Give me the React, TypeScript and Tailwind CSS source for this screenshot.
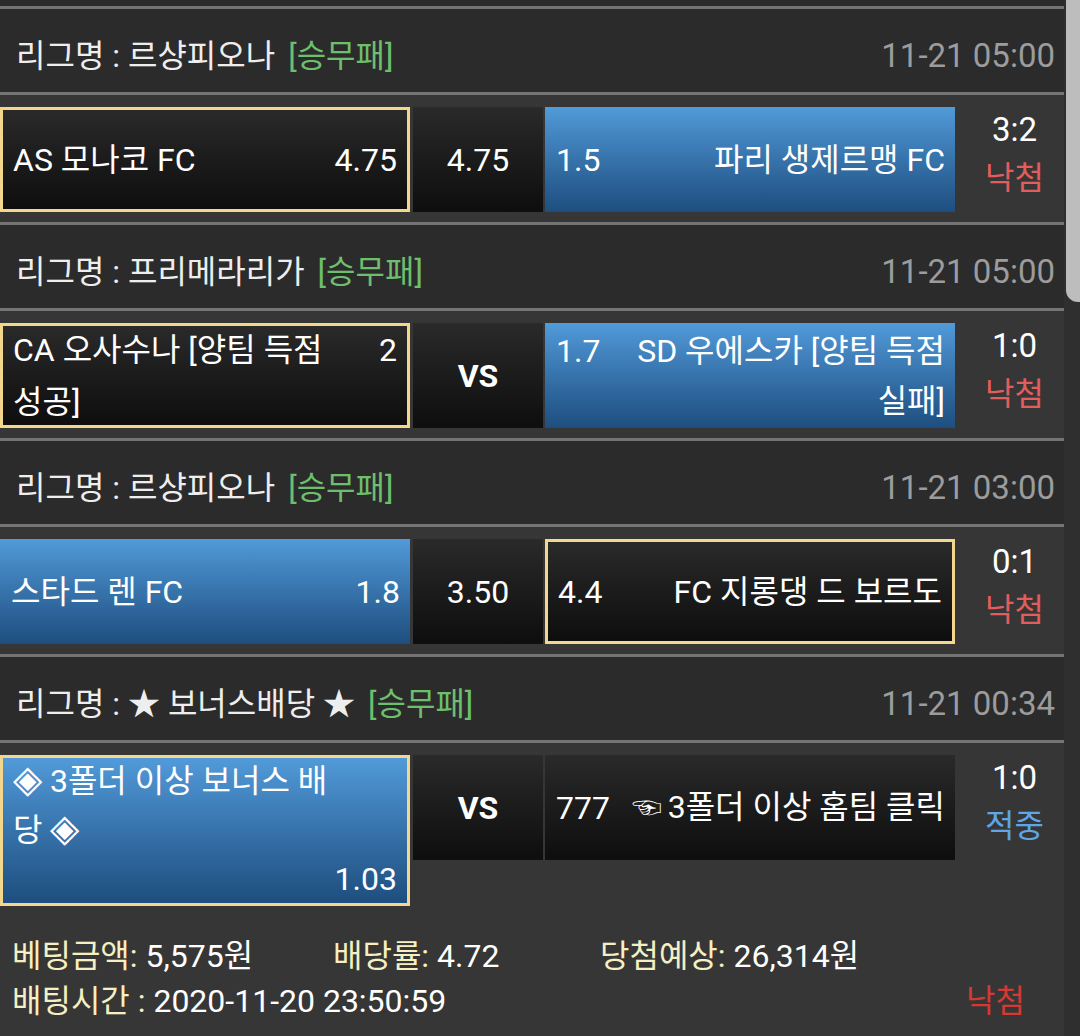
import React from "react";

function Header({ league, time }: { league: string; time: string }) {
  return (
    <div className="h-[86px] border-t-[3px] border-[#747474] bg-[#2b2b2b] flex items-center justify-between pl-[16px] pr-[9px] pt-[11px] text-[32px] leading-[40px]">
      <div className="flex items-center">
        <span className="text-[#eeeeee]">리그명 : {league}</span>
        <span className="ml-[13px] text-[#6dbf6d]">[승무패]</span>
      </div>
      <span className="text-[#9c9c9c] text-[33px]">{time}</span>
    </div>
  );
}

const blackBg = "bg-linear-to-b from-[#2a2a2a] to-[#0e0e0e]";
const blueBg = "bg-linear-to-b from-[#519ad9] to-[#1e4e7f]";
const gold = "border-[3px] border-[#f3d78c]";

function Score({ score, result, win }: { score: string; result: string; win?: boolean }) {
  return (
    <div className="flex-1 flex flex-col items-center pl-[10px] -mt-[1px] text-[32px] leading-[48px]">
      <span className="text-white text-[33px]">{score}</span>
      <span className={win ? "text-[#5ea6e6]" : "text-[#e35d5d]"}>{result}</span>
    </div>
  );
}

function Middle({ text, bold }: { text: string; bold?: boolean }) {
  return (
    <div
      className={`ml-[3px] w-[130px] h-[105px] flex items-center justify-center ${blackBg} ${
        bold ? "font-bold text-[32px]" : "text-[32px]"
      } text-white`}
    >
      {text}
    </div>
  );
}

function Row({ children }: { children: React.ReactNode }) {
  return (
    <div className="h-[130px] border-t-[3px] border-[#747474] bg-[#363636] flex items-start pt-[12px]">
      {children}
    </div>
  );
}

export default function App() {
  return (
    <div className="w-[1080px] h-[1036px] bg-[#363636] flex overflow-hidden font-[Roboto,'Noto_Sans_CJK_KR',sans-serif] text-white">
      <div className="w-[1064px] flex flex-col">
        <div className="h-[6px] bg-[#2b2b2b]" />

        {/* Section 1 */}
        <Header league="르샹피오나" time="11-21 05:00" />
        <Row>
          <div className={`w-[410px] h-[105px] ${gold} ${blackBg} flex items-center justify-between px-[10px] text-[32px] leading-[48px]`}>
            <span>AS 모나코 FC</span>
            <span>4.75</span>
          </div>
          <Middle text="4.75" />
          <div className={`ml-[2px] w-[410px] h-[105px] ${blueBg} flex items-center justify-between pl-[11px] pr-[10px] text-[32px] leading-[48px]`}>
            <span>1.5</span>
            <span>파리 생제르맹 FC</span>
          </div>
          <Score score="3:2" result="낙첨" />
        </Row>

        {/* Section 2 */}
        <Header league="프리메라리가" time="11-21 05:00" />
        <Row>
          <div className={`w-[410px] h-[105px] ${gold} ${blackBg} flex items-center px-[10px] text-[32px] leading-[52px]`}>
            <div className="flex w-full items-start justify-between">
              <span>
                CA 오사수나 [양팀 득점
                <br />
                성공]
              </span>
              <span>2</span>
            </div>
          </div>
          <Middle text="VS" bold />
          <div className={`ml-[2px] w-[410px] h-[105px] ${blueBg} flex items-center pl-[11px] pr-[10px] text-[32px] leading-[50px]`}>
            <div className="flex w-full items-start justify-between">
              <span>1.7</span>
              <span className="text-right">
                SD 우에스카 [양팀 득점
                <br />
                실패]
              </span>
            </div>
          </div>
          <Score score="1:0" result="낙첨" />
        </Row>

        {/* Section 3 */}
        <Header league="르샹피오나" time="11-21 03:00" />
        <Row>
          <div className={`w-[410px] h-[105px] ${blueBg} flex items-center justify-between pl-[11px] pr-[10px] text-[32px] leading-[48px]`}>
            <span>스타드 렌 FC</span>
            <span>1.8</span>
          </div>
          <Middle text="3.50" />
          <div className={`ml-[2px] w-[410px] h-[105px] ${gold} ${blackBg} flex items-center justify-between px-[10px] text-[32px] leading-[48px]`}>
            <span>4.4</span>
            <span>FC 지롱댕 드 보르도</span>
          </div>
          <Score score="0:1" result="낙첨" />
        </Row>

        {/* Section 4 */}
        <Header league="★ 보너스배당 ★" time="11-21 00:34" />
        <div className="flex-1 border-t-[3px] border-[#747474] bg-[#363636] flex flex-col pt-[12px]">
          <div className="flex items-start">
            <div className={`w-[410px] h-[151px] ${gold} ${blueBg} flex flex-col justify-center px-[10px] text-[32px] leading-[49px]`}>
              <span>
                <span className="text-[38px] leading-none">◈</span> 3폴더 이상 보너스 배
                <br />
                당 <span className="text-[38px] leading-none">◈</span>
              </span>
              <span className="text-right">1.03</span>
            </div>
            <Middle text="VS" bold />
            <div className={`ml-[2px] w-[410px] h-[105px] ${blackBg} flex items-center justify-between pl-[11px] pr-[10px] text-[32px] leading-[48px]`}>
              <span>777</span>
              <span>
                <span className="text-[30px] mr-[6px]">☜</span>3폴더 이상 홈팀 클릭
              </span>
            </div>
            <Score score="1:0" result="적중" win />
          </div>

          <div className="mt-[28px] pl-[12px] pr-[39px] text-[32px] leading-[45px]">
            <div className="flex">
              <div className="w-[321px]">
                <span className="text-[#f6efc2]">베팅금액:</span> 5,575원
              </div>
              <div className="w-[267px]">
                <span className="text-[#f6efc2]">배당률:</span> 4.72
              </div>
              <div>
                <span className="text-[#f6efc2]">당첨예상:</span> 26,314원
              </div>
            </div>
            <div className="flex justify-between">
              <div>
                <span className="text-[#f6efc2]">배팅시간 :</span> 2020-11-20 23:50:59
              </div>
              <span className="text-[#d23a33]">낙첨</span>
            </div>
          </div>
        </div>
      </div>
      <div className="w-[16px] bg-[#2f2f2f] relative">
        <div className="absolute right-0 top-0 w-[14px] h-[302px] bg-[#bdbdbd] rounded-bl-[12px]" />
      </div>
    </div>
  );
}
